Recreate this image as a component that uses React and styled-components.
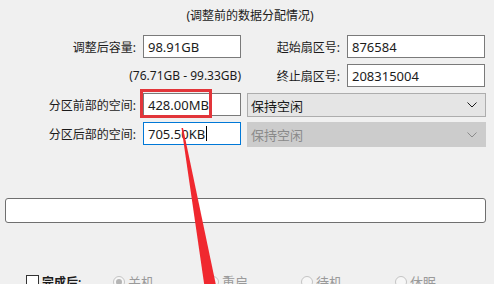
import React from 'react';
import styled, { createGlobalStyle } from 'styled-components';

const GlobalStyle = createGlobalStyle`
  html, body {
    margin: 0;
    padding: 0;
    background: #f0f0f0;
    overflow: hidden;
  }
  body {
    font-family: "Noto Sans", "Noto Sans CJK SC", sans-serif;
    font-size: 12px;
    color: #1b1b1b;
  }
`;

const Page = styled.div`
  position: relative;
  width: 494px;
  height: 284px;
  overflow: hidden;
`;

const Title = styled.div`
  height: 32px;
  line-height: 32px;
  text-align: center;
  padding-left: 6px;
`;

const Form = styled.div`
  margin-top: 3px;
  display: grid;
  grid-template-columns: 137px 98px 239px;
  grid-template-rows: repeat(4, 23px);
  column-gap: 6px;
  row-gap: 6px;
`;

const Label = styled.div`
  display: flex;
  align-items: center;
  justify-content: flex-end;
  padding-right: 1px;
  white-space: nowrap;
`;

const Range = styled(Label)`
  grid-column: 1 / span 2;
  padding-right: 0;
`;

const InputWrap = styled.div`
  position: relative;
  display: flex;
`;

const Field = styled.div`
  flex: 1;
  display: flex;
  align-items: center;
  box-sizing: border-box;
  height: 23px;
  padding-left: 4px;
  background: #fff;
  border: 1px solid ${({ $focused }) => ($focused ? '#0078d7' : '#7a7a7a')};
  font-size: 13px;
  white-space: nowrap;
`;

const Caret = styled.span`
  display: inline-block;
  width: 1px;
  height: 15px;
  background: #000;
  margin-left: 1px;
`;

const Highlight = styled.div`
  position: absolute;
  left: -3px;
  top: -4px;
  width: 72px;
  height: 29px;
  box-sizing: border-box;
  border: 3px solid #e2353a;
  pointer-events: none;
`;

const Sector = styled.div`
  display: grid;
  grid-template-columns: 94px 138px;
  column-gap: 6px;
`;

const Select = styled.div`
  display: flex;
  align-items: center;
  justify-content: space-between;
  box-sizing: border-box;
  height: ${({ $disabled }) => ($disabled ? '25px' : '24px')};
  padding: 0 8px 0 3px;
  background: ${({ $disabled }) => ($disabled ? '#cccccc' : '#e5e5e5')};
  border: 1px solid ${({ $disabled }) => ($disabled ? '#cccccc' : '#adadad')};
  color: ${({ $disabled }) => ($disabled ? '#8a8a8a' : '#1b1b1b')};
  font-size: 13px;
`;

const Progress = styled.div`
  margin: 53px 8px 0 5px;
  height: 25px;
  box-sizing: border-box;
  background: #fff;
  border: 1px solid #6f6f6f;
  border-radius: 3px;
`;

const Footer = styled.div`
  margin-top: 49px;
  display: grid;
  grid-template-columns: 87px repeat(4, 94px);
  padding-left: 26px;
  height: 16px;
  align-items: center;
`;

const Check = styled.div`
  display: flex;
  align-items: center;
  gap: 3px;
  font-weight: 600;
  &::before {
    content: '';
    width: 13px;
    height: 13px;
    box-sizing: border-box;
    border: 1px solid #333;
    background: #fff;
  }
`;

const Option = styled.div`
  display: flex;
  align-items: center;
  gap: 3px;
  color: #9a9a9a;
  font-size: 13px;
`;

const Radio = styled.span`
  width: 12px;
  height: 12px;
  box-sizing: border-box;
  border-radius: 50%;
  border: 1px solid #c4c4c4;
  background: #f7f7f7;
  display: flex;
  align-items: center;
  justify-content: center;
  &::after {
    content: '';
    width: 6px;
    height: 6px;
    border-radius: 50%;
    background: ${({ $checked }) => ($checked ? '#b5b5b5' : 'transparent')};
  }
`;

const Chevron = () => (
  <svg width="10" height="6" viewBox="0 0 10 6">
    <path d="M0.5 0.5 L5 5 L9.5 0.5" fill="none" stroke="currentColor" strokeWidth="1" />
  </svg>
);

const Arrow = styled.svg`
  position: absolute;
  left: 0;
  top: 0;
  pointer-events: none;
`;

export default function App() {
  const options = [
    { name: '关机', checked: true },
    { name: '重启' },
    { name: '待机' },
    { name: '休眠' },
  ];
  return (
    <Page>
      <GlobalStyle />
      <Title>(调整前的数据分配情况)</Title>
      <Form>
        <Label>调整后容量:</Label>
        <InputWrap>
          <Field>98.91GB</Field>
        </InputWrap>
        <Sector>
          <Label>起始扇区号:</Label>
          <Field>876584</Field>
        </Sector>

        <Range>(76.71GB - 99.33GB)</Range>
        <Sector>
          <Label>终止扇区号:</Label>
          <Field>208315004</Field>
        </Sector>

        <Label>分区前部的空间:</Label>
        <InputWrap>
          <Field>428.00MB</Field>
          <Highlight />
        </InputWrap>
        <Select>
          <span>保持空闲</span>
          <Chevron />
        </Select>

        <Label>分区后部的空间:</Label>
        <InputWrap>
          <Field $focused>
            705.50KB<Caret />
          </Field>
        </InputWrap>
        <Select $disabled>
          <span>保持空闲</span>
          <Chevron />
        </Select>
      </Form>
      <Progress />
      <Footer>
        <Check>完成后:</Check>
        {options.map((o) => (
          <Option key={o.name}>
            <Radio $checked={o.checked} />
            {o.name}
          </Option>
        ))}
      </Footer>
      <Arrow width="494" height="284" viewBox="0 0 494 284">
        <polygon points="181.5,128 183,128 217,290 205,290" fill="#f0282f" />
      </Arrow>
    </Page>
  );
}
